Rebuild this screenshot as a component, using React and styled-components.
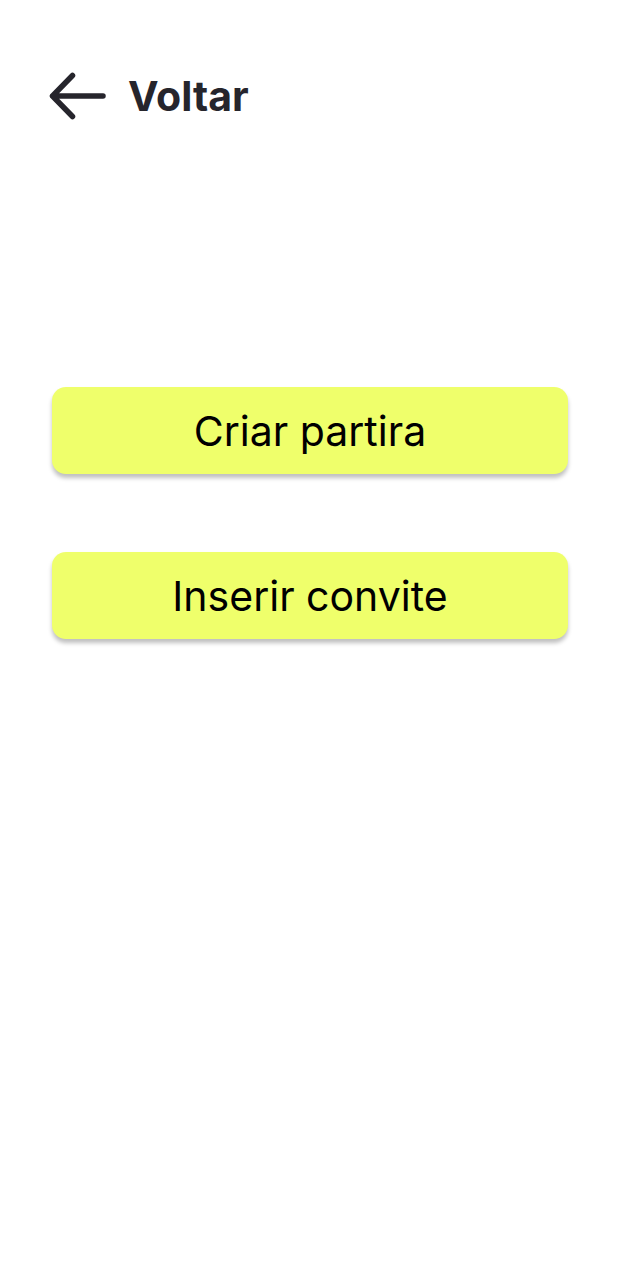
import * as React from "react";
import styled, { createGlobalStyle } from "styled-components";

const GlobalStyle = createGlobalStyle`
  html, body {
    margin: 0;
    padding: 0;
    background: #ffffff;
  }
  body {
    font-family: "Inter", "Noto Sans", sans-serif;
  }
`;

function BackArrow() {
  return (
    <svg width="58" height="48" viewBox="0 0 58 48" fill="none">
      <path
        d="M55 24H4.5M4.5 24L24.5 3.5M4.5 24L24.5 44.5"
        stroke="#26252c"
        strokeWidth="5.5"
        strokeLinecap="round"
        strokeLinejoin="round"
      />
    </svg>
  );
}

export default function App() {
  return (
    <>
      <GlobalStyle />
      <Screen>
        <Header>
          <BackButton type="button">
            <BackArrow />
            <BackLabel>Voltar</BackLabel>
          </BackButton>
        </Header>
        <Actions>
          <ActionButton type="button">Criar partira</ActionButton>
          <ActionButton type="button">Inserir convite</ActionButton>
        </Actions>
      </Screen>
    </>
  );
}

const Screen = styled.div`
  width: 622px;
  min-height: 1280px;
  background: #fff;
  display: flex;
  flex-direction: column;
`;

const Header = styled.header`
  padding: 72px 0 0 48px;
  display: flex;
  align-items: center;
`;

const BackButton = styled.button`
  display: flex;
  align-items: center;
  gap: 22px;
  background: none;
  border: none;
  padding: 0;
  cursor: pointer;
`;

const BackLabel = styled.span`
  font-family: "Inter", sans-serif;
  font-weight: 700;
  font-size: 41px;
  color: #26252c;
  line-height: 48px;
`;

const Actions = styled.div`
  display: flex;
  flex-direction: column;
  gap: 78px;
  padding: 267px 54px 0 52px;
`;

const ActionButton = styled.button`
  height: 87px;
  width: 100%;
  border: none;
  border-radius: 14px;
  background: #efff6b;
  box-shadow: 0 4px 4px rgba(0, 0, 0, 0.25);
  font-family: "Inter", sans-serif;
  font-size: 41px;
  font-weight: 400;
  color: #000;
  cursor: pointer;
`;
